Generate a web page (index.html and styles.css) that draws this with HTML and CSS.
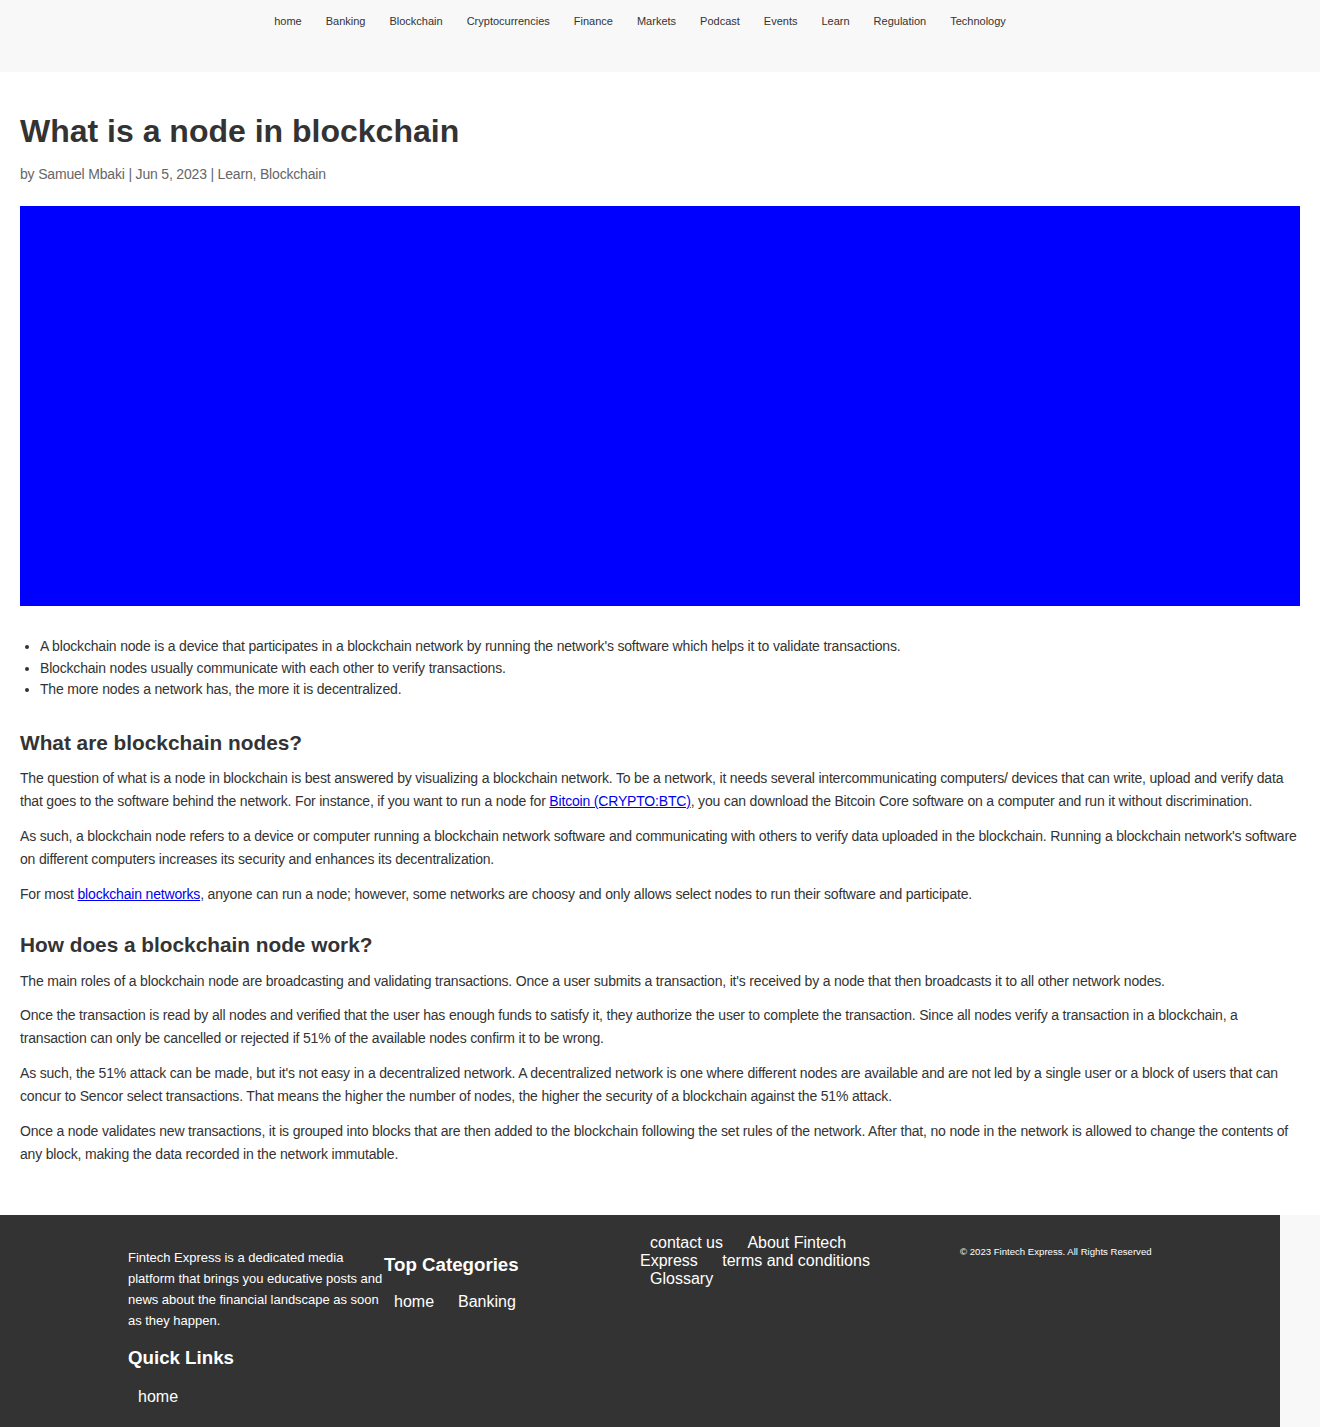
FILE: index.html
```html
<!DOCTYPE html>
<html lang="en">
<head>
<meta charset="utf-8">
<title>What is a node in blockchain</title>
<link rel="stylesheet" href="styles.css">
</head>
<body>
<header class="site-header">
  <nav class="main-nav">
    <a href="#">home</a>
    <a href="#">Banking</a>
    <a href="#">Blockchain</a>
    <a href="#">Cryptocurrencies</a>
    <a href="#">Finance</a>
    <a href="#">Markets</a>
    <a href="#">Podcast</a>
    <a href="#">Events</a>
    <a href="#">Learn</a>
    <a href="#">Regulation</a>
    <a href="#">Technology</a>
  </nav>
</header>
<main class="article">
  <h1 class="title">What is a node in blockchain</h1>
  <p class="meta">by Samuel Mbaki | Jun 5, 2023 | Learn, Blockchain</p>
  <div class="hero"></div>
  <ul class="summary">
    <li>A blockchain node is a device that participates in a blockchain network by running the network's software which helps it to validate transactions.</li>
    <li>Blockchain nodes usually communicate with each other to verify transactions.</li>
    <li>The more nodes a network has, the more it is decentralized.</li>
  </ul>
  <h2>What are blockchain nodes?</h2>
  <p>The question of what is a node in blockchain is best answered by visualizing a blockchain network. To be a network, it needs several intercommunicating computers/ devices that can write, upload and verify data that goes to the software behind the network. For instance, if you want to run a node for <a href="#">Bitcoin (CRYPTO:BTC)</a>, you can download the Bitcoin Core software on a computer and run it without discrimination.</p>
  <p>As such, a blockchain node refers to a device or computer running a blockchain network software and communicating with others to verify data uploaded in the blockchain. Running a blockchain network's software on different computers increases its security and enhances its decentralization.</p>
  <p>For most <a href="#">blockchain networks</a>, anyone can run a node; however, some networks are choosy and only allows select nodes to run their software and participate.</p>
  <h2 class="after-p">How does a blockchain node work?</h2>
  <p>The main roles of a blockchain node are broadcasting and validating transactions. Once a user submits a transaction, it's received by a node that then broadcasts it to all other network nodes.</p>
  <p>Once the transaction is read by all nodes and verified that the user has enough funds to satisfy it, they authorize the user to complete the transaction. Since all nodes verify a transaction in a blockchain, a transaction can only be cancelled or rejected if 51% of the available nodes confirm it to be wrong.</p>
  <p>As such, the 51% attack can be made, but it's not easy in a decentralized network. A decentralized network is one where different nodes are available and are not led by a single user or a block of users that can concur to Sencor select transactions. That means the higher the number of nodes, the higher the security of a blockchain against the 51% attack.</p>
  <p>Once a node validates new transactions, it is grouped into blocks that are then added to the blockchain following the set rules of the network. After that, no node in the network is allowed to change the contents of any block, making the data recorded in the network immutable.</p>
</main>
<footer class="site-footer">
  <div class="footer-inner">
    <div class="fcol">
      <p class="about">Fintech Express is a dedicated media platform that brings you educative posts and news about the financial landscape as soon as they happen.</p>
      <h3 class="quick">Quick Links</h3>
      <div class="flinks quick-links"><a href="#">home</a></div>
    </div>
    <div class="fcol">
      <h3 class="topcat">Top Categories</h3>
      <div class="flinks"><a href="#">home</a><a href="#">Banking</a></div>
    </div>
    <div class="fcol">
      <div class="pages"><a href="#">contact us</a> <a href="#">About Fintech Express</a> <a href="#">terms and conditions</a> <a href="#">Glossary</a></div>
    </div>
    <div class="fcol">
      <p class="copy">© 2023 Fintech Express. All Rights Reserved</p>
    </div>
  </div>
</footer>
</body>
</html>
```
FILE: styles.css
```css
html, body {
  margin: 0;
  padding: 0;
}
body {
  font-family: "Liberation Sans", Arial, sans-serif;
  background: #f8f8f8;
  color: #333;
}
.site-header {
  background: #f8f8f8;
  height: 72px;
}
.main-nav {
  display: flex;
  justify-content: center;
  gap: 24px;
  padding-top: 15px;
  padding-right: 40px;
}
.main-nav a {
  font-size: 11px;
  color: #333;
  text-decoration: none;
  line-height: 13px;
}
.article {
  background: #fff;
  padding: 39px 20px 37px;
}
.title {
  margin: 0;
  font-size: 32px;
  line-height: 40px;
  font-weight: bold;
  color: #333;
}
.article p.meta {
  margin: 14px 0 23px;
  font-size: 14px;
  letter-spacing: -0.18px;
  line-height: 18px;
  color: #666;
}
.hero {
  height: 400px;
  background: #0000ff;
}
.summary {
  margin: 30px 0 0;
  padding-left: 20px;
  font-size: 14px;
  letter-spacing: -0.18px;
  line-height: 21.5px;
  color: #333;
}
.article h2 {
  font-size: 20.8px;
  line-height: 26px;
  margin: 29px 0 11.5px;
  font-weight: bold;
  color: #333;
}
.article h2.after-p {
  margin-top: 26.5px;
}
.article p {
  font-size: 14px;
  letter-spacing: -0.18px;
  line-height: 23px;
  margin: 0 0 11.8px;
  color: #333;
}
.article a {
  color: #0000ee;
}
.site-footer {
  background: #333;
  width: 1280px;
  height: 212px;
  color: #fff;
}
.footer-inner {
  width: 1024px;
  margin: 0 auto;
  display: grid;
  grid-template-columns: 256px 256px 320px 192px;
}
.fcol a {
  color: #fff;
  text-decoration: none;
}
.about {
  margin: 32px 0 0;
  font-size: 13px;
  letter-spacing: -0.02px;
  line-height: 21px;
}
.site-footer h3 {
  font-size: 18.7px;
  line-height: 22px;
  margin: 0;
}
.site-footer h3.quick {
  margin-top: 16.5px;
}
.site-footer h3.topcat {
  margin-top: 39px;
}
.flinks {
  display: flex;
  gap: 4px;
  padding-top: 16px;
}
.flinks.quick-links {
  padding-top: 18px;
}
.flinks a {
  font-size: 16px;
  line-height: 20px;
  padding: 0 10px;
}
.pages {
  padding-top: 19px;
  font-size: 16px;
  line-height: 18px;
  width: 240px;
}
.pages a {
  padding: 0 10px;
}
.copy {
  margin: 31px 0 0;
  font-size: 9.6px;
  line-height: 12px;
}
```
